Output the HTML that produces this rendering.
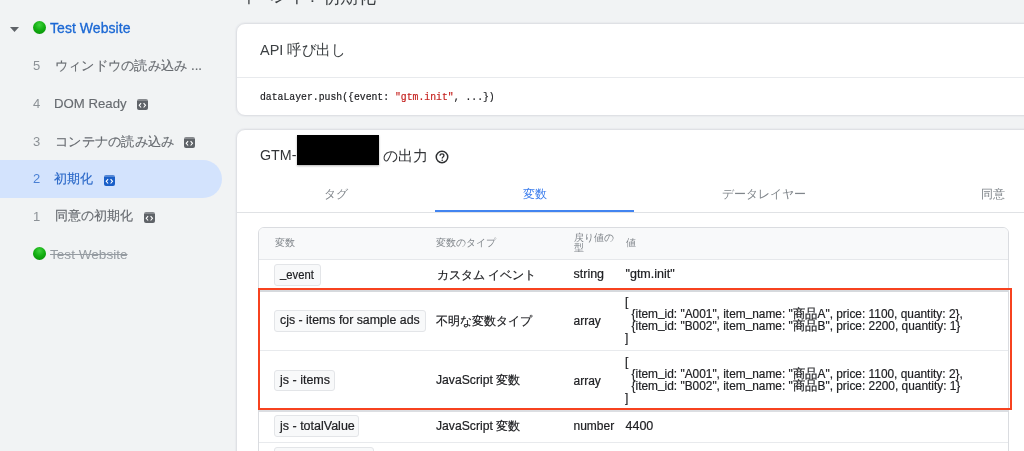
<!DOCTYPE html>
<html><head><meta charset="utf-8">
<style>
*{box-sizing:border-box;margin:0;padding:0}
html,body{will-change:transform;width:1024px;height:451px;overflow:hidden;background:#f1f3f4;font-family:"Liberation Sans",sans-serif;color:#202124}
.a{position:absolute;white-space:nowrap}
.t{position:absolute;white-space:nowrap;line-height:1;transform-origin:0 0}
.num{color:#8c9196;font-size:13px}
.side{color:#676b70;font-size:13px;-webkit-text-stroke:0.15px}
.ico{position:absolute;width:11px;height:11px;border-radius:2px;background:#5f6368;border-top:2px solid rgba(255,255,255,.25)}
.ico svg{top:-2px!important}
.ico svg{position:absolute;left:0;top:0}
.card{position:absolute;background:#fff;border:1px solid #dfe1e5;border-radius:9px;box-shadow:0 0 1px 0.6px #e9ebee}
.chip{position:absolute;background:#f8f9fa;border:1px solid #e3e5e8;border-radius:3px}
.cell{color:#202124;font-size:12.5px;-webkit-text-stroke:0.2px}
.val{transform:scaleX(0.95)}
.us{position:relative;top:-2px}
.hd{color:#80868b;font-size:10.5px}
.hl{position:absolute;height:1px;background:#e8eaed}
</style></head><body>

<!-- page title (cut off) -->
<div class="t" style="left:240.3px;top:-12px;font-size:17.5px;color:#3c4043;transform:scaleX(0.93)">イベント</div>
<div class="t" style="left:310px;top:-12px;font-size:17.5px;color:#3c4043">:</div>
<div class="t" style="left:322px;top:-12.5px;font-size:18.2px;color:#3c4043">初期化</div>

<!-- sidebar -->
<svg class="a" style="left:10px;top:27px" width="9" height="5" viewBox="0 0 9 5"><path d="M0 0H9L4.5 5Z" fill="#5f6368"/></svg>
<div class="a" style="left:33px;top:21px;width:13px;height:13px;border-radius:50%;background:radial-gradient(circle at 50% 30%,#3fd03c 0%,#14b012 45%,#089208 85%,#0a7f0a 100%)"></div>
<div class="t" style="left:50px;top:21px;font-size:14px;color:#1b68d4;-webkit-text-stroke:0.3px #1b68d4;letter-spacing:0.05px">Test Website</div>

<div class="t num" style="left:33px;top:59px">5</div>
<div class="t side" style="left:55px;top:59px;transform:scaleX(1.018)">ウィンドウの読み込み ...</div>

<div class="t num" style="left:33px;top:97px">4</div>
<div class="t side" style="left:54.2px;top:97px;transform:scaleX(1.015)">DOM Ready</div>
<div class="ico" style="left:137px;top:99px"><svg width="11" height="11" viewBox="0 0 11 11"><path d="M4.1 4.1L2.2 6.3L4.1 8.5M6.6 4.1L8.5 6.3L6.6 8.5" stroke="#fff" stroke-width="1.1" fill="none"/></svg></div>

<div class="t num" style="left:33px;top:135px">3</div>
<div class="t side" style="left:55px;top:135px;transform:scaleX(1.02)">コンテナの読み込み</div>
<div class="ico" style="left:184px;top:137px"><svg width="11" height="11" viewBox="0 0 11 11"><path d="M4.1 4.1L2.2 6.3L4.1 8.5M6.6 4.1L8.5 6.3L6.6 8.5" stroke="#fff" stroke-width="1.1" fill="none"/></svg></div>

<div class="a" style="left:-20px;top:160px;width:242px;height:38px;border-radius:19px;background:#d3e3fd"></div>
<div class="t num" style="left:33px;top:172px;color:#4a80d4">2</div>
<div class="t side" style="left:54px;top:172px;color:#2a68c8">初期化</div>
<div class="ico" style="left:103.5px;top:174.5px;background:#1a5fc8"><svg width="11" height="11" viewBox="0 0 11 11"><path d="M4.1 4.1L2.2 6.3L4.1 8.5M6.6 4.1L8.5 6.3L6.6 8.5" stroke="#fff" stroke-width="1.1" fill="none"/></svg></div>

<div class="t num" style="left:33px;top:210px">1</div>
<div class="t side" style="left:54.5px;top:209px">同意の初期化</div>
<div class="ico" style="left:143.5px;top:212px"><svg width="11" height="11" viewBox="0 0 11 11"><path d="M4.1 4.1L2.2 6.3L4.1 8.5M6.6 4.1L8.5 6.3L6.6 8.5" stroke="#fff" stroke-width="1.1" fill="none"/></svg></div>

<div class="a" style="left:33px;top:247px;width:13px;height:13px;border-radius:50%;background:radial-gradient(circle at 50% 30%,#3fd03c 0%,#14b012 45%,#089208 85%,#0a7f0a 100%)"></div>
<div class="t" style="left:50px;top:247.5px;font-size:13.6px;color:#959ba1;text-decoration:line-through">Test Website</div>

<!-- card 1 -->
<div class="card" style="left:236px;top:23px;width:900px;height:92.5px"></div>
<div class="t" style="left:260px;top:42px;font-size:15px;color:#3c4043;transform:scaleX(0.965)">API 呼び出し</div>
<div class="hl" style="left:237px;top:77px;width:900px"></div>
<div class="t" style="left:260px;top:92px;font-family:'Liberation Mono',monospace;font-size:11px;color:#202124;transform:scaleX(0.889);-webkit-text-stroke:0.2px">dataLayer.push({event: <span style="color:#c5221f">"gtm.init"</span>, ...})</div>

<!-- card 2 -->
<div class="card" style="left:236px;top:129px;width:900px;height:400px"></div>
<div class="t" style="left:259.5px;top:146.8px;font-size:15.5px;color:#333538;transform:scaleX(0.92)">GTM-</div>
<div class="a" style="left:296.5px;top:134.5px;width:82px;height:30.3px;background:#000;box-shadow:0 1px 2px rgba(0,0,0,.3)"></div>
<div class="t" style="left:382.5px;top:148.5px;font-size:14.5px;color:#333538">の出力</div>
<svg class="a" style="left:434.7px;top:150px" width="14" height="14" viewBox="0 0 14 14"><circle cx="7" cy="7" r="5.75" stroke="#2d2f31" stroke-width="1.5" fill="none"/><path d="M5.1 5.7C5.1 4.5 5.9 3.8 7 3.8C8.1 3.8 8.9 4.5 8.9 5.5C8.9 6.8 7.2 7 7.2 8.6" stroke="#2d2f31" stroke-width="1.35" fill="none"/><circle cx="7.2" cy="10.2" r=".8" fill="#2d2f31"/></svg>

<div class="t" style="left:324px;top:187.8px;font-size:12px;color:#80868b">タグ</div>
<div class="t" style="left:522.5px;top:187.8px;font-size:12px;color:#3b7ded">変数</div>
<div class="t" style="left:721.5px;top:187.8px;font-size:12px;color:#80868b">データレイヤー</div>
<div class="t" style="left:981px;top:187.8px;font-size:12px;color:#80868b">同意</div>
<div class="hl" style="left:237px;top:212px;width:900px;background:#e0e2e5"></div>
<div class="a" style="left:435px;top:210.2px;width:199px;height:2px;background:#4284f0"></div>

<!-- table -->
<div class="a" style="left:258px;top:227px;width:751px;height:300px;border:1px solid #dadce0;border-radius:6px;overflow:hidden;background:#fff">
  <div class="a" style="left:0;top:0;width:100%;height:31.5px;background:#f8f9fa;border-bottom:1px solid #e6e8eb"></div>
</div>
<div class="t hd" style="left:274.7px;top:238px;font-size:10px">変数</div>
<div class="t hd" style="left:436.4px;top:238px;font-size:10px">変数のタイプ</div>
<div class="t hd" style="left:573.5px;top:232.5px;line-height:10.5px;font-size:10px">戻り値の<br>型</div>
<div class="t hd" style="left:625.5px;top:238px;font-size:10px">値</div>

<!-- row 1 -->
<div class="chip" style="left:274px;top:264px;width:47px;height:21.5px"></div>
<div class="t cell" style="left:280px;top:268.5px;transform:scaleX(0.9)"><span class="us">_</span>event</div>
<div class="t cell" style="left:436.5px;top:268.5px;font-size:12px">カスタム イベント</div>
<div class="t cell" style="left:573.5px;top:268px">string</div>
<div class="t cell" style="left:625.5px;top:268px">"gtm.init"</div>
<div class="hl" style="left:259px;top:289.5px;width:749px;height:2px;background:#d6d9dd"></div>

<!-- row 2 -->
<div class="chip" style="left:274px;top:310px;width:152px;height:21.5px"></div>
<div class="t cell" style="left:280px;top:314px;transform:scaleX(0.986)">cjs - items for sample ads</div>
<div class="t cell" style="left:436px;top:314.5px;font-size:12.2px">不明な変数タイプ</div>
<div class="t cell" style="left:573.5px;top:315px;font-size:12px">array</div>
<div class="t cell val" style="left:624.8px;top:295.8px;line-height:12.15px">[<br>&nbsp;&nbsp;{item<span class="us">_</span>id: "A001", item<span class="us">_</span>name: "商品A", price: 1100, quantity: 2},<br>&nbsp;&nbsp;{item<span class="us">_</span>id: "B002", item<span class="us">_</span>name: "商品B", price: 2200, quantity: 1}<br>]</div>
<div class="hl" style="left:259px;top:350px;width:749px"></div>

<!-- row 3 -->
<div class="chip" style="left:274px;top:369.5px;width:61px;height:21.5px"></div>
<div class="t cell" style="left:280px;top:374px">js - items</div>
<div class="t cell" style="left:436px;top:374px;font-size:12.2px">JavaScript 変数</div>
<div class="t cell" style="left:573.5px;top:375px;font-size:12px">array</div>
<div class="t cell val" style="left:624.8px;top:355.8px;line-height:12.15px">[<br>&nbsp;&nbsp;{item<span class="us">_</span>id: "A001", item<span class="us">_</span>name: "商品A", price: 1100, quantity: 2},<br>&nbsp;&nbsp;{item<span class="us">_</span>id: "B002", item<span class="us">_</span>name: "商品B", price: 2200, quantity: 1}<br>]</div>
<div class="hl" style="left:259px;top:410px;width:749px;height:1.5px;background:#dcdee2"></div>

<!-- row 4 -->
<div class="chip" style="left:274px;top:415px;width:85px;height:21.5px"></div>
<div class="t cell" style="left:280px;top:420px">js - totalValue</div>
<div class="t cell" style="left:436px;top:420px;font-size:12.2px">JavaScript 変数</div>
<div class="t cell" style="left:573.5px;top:420px;font-size:12px">number</div>
<div class="t cell" style="left:625.5px;top:420px">4400</div>
<div class="hl" style="left:259px;top:442px;width:749px"></div>

<!-- row 5 -->
<div class="chip" style="left:274px;top:447px;width:99.5px;height:21.5px"></div>

<!-- red highlight -->
<div class="a" style="left:257.5px;top:287.5px;width:754.3px;height:122.6px;border:2px solid #f7421f"></div>

</body></html>
